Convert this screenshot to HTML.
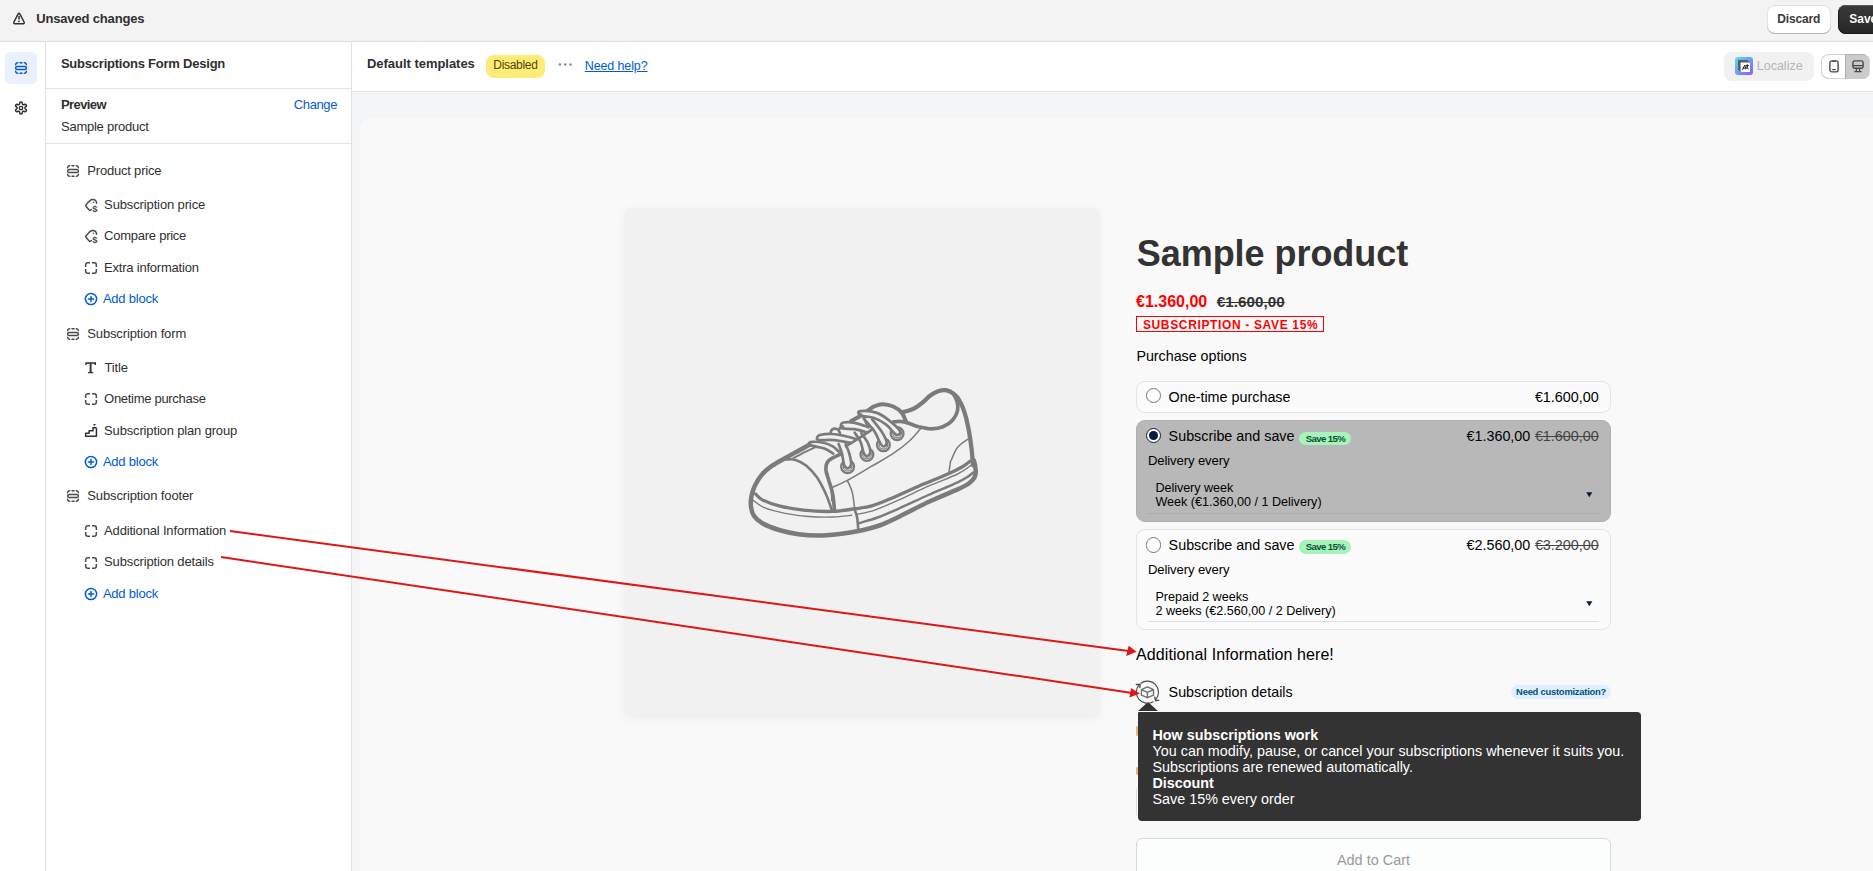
<!DOCTYPE html>
<html lang="en">
<head>
<meta charset="utf-8">
<title>Subscriptions Form Design</title>
<style>
*{box-sizing:border-box;margin:0;padding:0}
html,body{width:1873px;height:871px;overflow:hidden;background:#f4f5f7}
body{position:relative;font-family:"Liberation Sans",Arial,sans-serif;color:#303030;font-size:13px}
.abs{position:absolute}
.t{position:absolute;white-space:nowrap;line-height:16px}
#topbar{left:0;top:0;width:1873px;height:42px;background:#f3f3f3;border-bottom:1px solid #e0e0e0}
#rail{left:0;top:42px;width:46px;height:829px;background:#fff;border-right:1px solid #e3e3e3}
#side{left:46px;top:42px;width:306px;height:829px;background:#fff;border-right:1px solid #e3e3e3}
#mainhead{left:352px;top:42px;width:1521px;height:50px;background:#fff;border-bottom:1px solid #e3e3e3}
#panel{left:360px;top:118px;width:1513px;height:753px;background:#f9f9f9;border-top-left-radius:10px}
.hr{position:absolute;height:1px;background:#e3e3e3}
svg{position:absolute;overflow:visible}
</style>
</head>
<body>
<div id="topbar" class="abs"></div>
<div id="rail" class="abs"></div>
<div id="side" class="abs"></div>
<div id="mainhead" class="abs"></div>
<div id="panel" class="abs"></div>
<!-- top bar -->
<div class="t" style="left:36.2px;top:11px;font-size:13px;font-weight:bold;letter-spacing:-0.156px;color:#303030;">Unsaved changes</div>
<div class="abs" style="left:1766.5px;top:5px;width:64.5px;height:29px;background:#fff;border-radius:8px;box-shadow:inset 0 -1px 0 #b5b5b5,inset 0 0 0 1px #e3e3e3"></div>
<div class="t" style="left:1777.3px;top:11px;font-size:12px;font-weight:bold;letter-spacing:-0.147px;color:#3a3a3a;">Discard</div>
<div class="abs" style="left:1838px;top:5px;width:60px;height:29px;background:linear-gradient(#3a3a3a,#262626);border-radius:8px;box-shadow:inset 0 1px 0 #5a5a5a,inset 0 0 0 1px #1a1a1a"></div>
<div class="t" style="left:1849.3px;top:11px;font-size:12px;font-weight:bold;letter-spacing:-0.008px;color:#ffffff;">Save</div>

<!-- left rail -->
<div class="abs" style="left:5px;top:52px;width:32px;height:32px;border-radius:5px;background:#ebf1fc"></div>
<!-- sidebar -->
<div class="t" style="left:60.9px;top:56px;font-size:13px;font-weight:bold;letter-spacing:-0.222px;color:#303030;">Subscriptions Form Design</div>
<div class="hr" style="left:46px;top:88px;width:305px"></div>
<div class="t" style="left:61px;top:97px;font-size:13px;font-weight:bold;letter-spacing:-0.594px;color:#303030;">Preview</div>
<div class="t" style="left:293.8px;top:97px;font-size:13px;letter-spacing:-0.391px;color:#005bd3;">Change</div>
<div class="t" style="left:61px;top:119px;font-size:13px;letter-spacing:-0.254px;color:#303030;">Sample product</div>
<div class="hr" style="left:46px;top:143px;width:305px"></div>
<div class="t" style="left:87.3px;top:163px;font-size:13px;letter-spacing:-0.200px;color:#303030;">Product price</div>
<div class="t" style="left:104.1px;top:197px;font-size:13px;letter-spacing:-0.129px;color:#303030;">Subscription price</div>
<div class="t" style="left:104.1px;top:228px;font-size:13px;letter-spacing:-0.251px;color:#303030;">Compare price</div>
<div class="t" style="left:104.1px;top:260px;font-size:13px;letter-spacing:-0.216px;color:#303030;">Extra information</div>
<div class="t" style="left:102.9px;top:291px;font-size:13px;letter-spacing:-0.210px;color:#005bd3;">Add block</div>
<div class="t" style="left:87.3px;top:326px;font-size:13px;letter-spacing:-0.139px;color:#303030;">Subscription form</div>
<div class="t" style="left:104.5px;top:360px;font-size:13px;letter-spacing:-0.136px;color:#303030;">Title</div>
<div class="t" style="left:104.1px;top:391px;font-size:13px;letter-spacing:-0.296px;color:#303030;">Onetime purchase</div>
<div class="t" style="left:104.1px;top:423px;font-size:13px;letter-spacing:-0.156px;color:#303030;">Subscription plan group</div>
<div class="t" style="left:102.9px;top:454px;font-size:13px;letter-spacing:-0.210px;color:#005bd3;">Add block</div>
<div class="t" style="left:87.3px;top:488px;font-size:13px;letter-spacing:-0.127px;color:#303030;">Subscription footer</div>
<div class="t" style="left:104.1px;top:523px;font-size:13px;letter-spacing:-0.170px;color:#303030;">Additional Information</div>
<div class="t" style="left:104.1px;top:554px;font-size:13px;letter-spacing:-0.147px;color:#303030;">Subscription details</div>
<div class="t" style="left:102.9px;top:586px;font-size:13px;letter-spacing:-0.210px;color:#005bd3;">Add block</div>

<!-- icons -->
<svg style="left:9.2px;top:9px" width="20" height="20" viewBox="0 0 20 20" fill="none" stroke="#303030" stroke-width="1.5" stroke-linecap="round" stroke-linejoin="round"><path d="M9.05 5.1Q10 3.5 10.95 5.1L15.05 13Q15.75 14.7 14.2 14.7H5.8Q4.25 14.7 4.95 13Z"/><path d="M10 7.5V10.1"/><circle cx="10" cy="12.35" r="0.9" fill="#303030" stroke="none"/></svg>
<svg style="left:10.97px;top:57.97px" width="20" height="20" viewBox="0 0 20 20" fill="none" stroke="#005bd3" stroke-width="1.5" stroke-linecap="round"><rect x="4.65" y="8.4" width="10.7" height="3.2" rx="1.6"/><path d="M4.65 6.7A2.05 2.05 0 0 1 6.7 4.65M9 4.65H11M13.3 4.65A2.05 2.05 0 0 1 15.35 6.7M4.65 13.3A2.05 2.05 0 0 0 6.7 15.35M9 15.35H11M13.3 15.35A2.05 2.05 0 0 0 15.35 13.3"/></svg>
<svg style="left:10.97px;top:97.85px" width="20" height="20" viewBox="0 0 20 20" fill="none" stroke="#303030" stroke-width="1.5" stroke-linejoin="round"><path d="M13.90 10.00 L13.92 10.17 L13.96 10.35 L14.05 10.53 L14.17 10.74 L14.35 10.96 L14.78 11.28 L15.20 11.64 L15.33 11.94 L15.37 12.23 L15.37 12.50 L15.30 12.76 L15.20 13.00 L15.04 13.21 L14.85 13.40 L14.62 13.54 L14.34 13.64 L14.02 13.68 L13.50 13.50 L13.01 13.28 L12.72 13.24 L12.49 13.24 L12.28 13.26 L12.11 13.31 L11.95 13.38 L11.81 13.48 L11.68 13.61 L11.56 13.77 L11.45 13.98 L11.34 14.24 L11.28 14.78 L11.18 15.32 L10.98 15.58 L10.76 15.77 L10.52 15.90 L10.26 15.97 L10.00 16.00 L9.74 15.97 L9.48 15.90 L9.24 15.77 L9.02 15.58 L8.82 15.32 L8.72 14.78 L8.66 14.24 L8.55 13.98 L8.44 13.77 L8.32 13.61 L8.19 13.48 L8.05 13.38 L7.89 13.31 L7.72 13.26 L7.51 13.24 L7.28 13.24 L6.99 13.28 L6.50 13.50 L5.98 13.68 L5.66 13.64 L5.38 13.54 L5.15 13.40 L4.96 13.21 L4.80 13.00 L4.70 12.76 L4.63 12.50 L4.63 12.23 L4.67 11.94 L4.80 11.64 L5.22 11.28 L5.65 10.96 L5.83 10.74 L5.95 10.53 L6.04 10.35 L6.08 10.17 L6.10 10.00 L6.08 9.83 L6.04 9.65 L5.95 9.47 L5.83 9.26 L5.65 9.04 L5.22 8.72 L4.80 8.36 L4.67 8.06 L4.63 7.77 L4.63 7.50 L4.70 7.24 L4.80 7.00 L4.96 6.79 L5.15 6.60 L5.38 6.46 L5.66 6.36 L5.98 6.32 L6.50 6.50 L6.99 6.72 L7.28 6.76 L7.51 6.76 L7.72 6.74 L7.89 6.69 L8.05 6.62 L8.19 6.52 L8.32 6.39 L8.44 6.23 L8.55 6.02 L8.66 5.76 L8.72 5.22 L8.82 4.68 L9.02 4.42 L9.24 4.23 L9.48 4.10 L9.74 4.03 L10.00 4.00 L10.26 4.03 L10.52 4.10 L10.76 4.23 L10.98 4.42 L11.18 4.68 L11.28 5.22 L11.34 5.76 L11.45 6.02 L11.56 6.23 L11.68 6.39 L11.81 6.52 L11.95 6.62 L12.11 6.69 L12.28 6.74 L12.49 6.76 L12.72 6.76 L13.01 6.72 L13.50 6.50 L14.02 6.32 L14.34 6.36 L14.62 6.46 L14.85 6.60 L15.04 6.79 L15.20 7.00 L15.30 7.24 L15.37 7.50 L15.37 7.77 L15.33 8.06 L15.20 8.36 L14.78 8.72 L14.35 9.04 L14.17 9.26 L14.05 9.47 L13.96 9.65 L13.92 9.83Z"/><circle cx="10" cy="10" r="1.7" stroke-width="1.35"/></svg>
<svg style="left:62.85px;top:160.95px" width="20" height="20" viewBox="0 0 20 20" fill="none" stroke="#4a4a4a" stroke-width="1.5" stroke-linecap="round"><rect x="4.65" y="8.4" width="10.7" height="3.2" rx="1.6"/><path d="M4.65 6.7A2.05 2.05 0 0 1 6.7 4.65M9 4.65H11M13.3 4.65A2.05 2.05 0 0 1 15.35 6.7M4.65 13.3A2.05 2.05 0 0 0 6.7 15.35M9 15.35H11M13.3 15.35A2.05 2.05 0 0 0 15.35 13.3"/></svg>
<svg style="left:62.85px;top:323.70px" width="20" height="20" viewBox="0 0 20 20" fill="none" stroke="#4a4a4a" stroke-width="1.5" stroke-linecap="round"><rect x="4.65" y="8.4" width="10.7" height="3.2" rx="1.6"/><path d="M4.65 6.7A2.05 2.05 0 0 1 6.7 4.65M9 4.65H11M13.3 4.65A2.05 2.05 0 0 1 15.35 6.7M4.65 13.3A2.05 2.05 0 0 0 6.7 15.35M9 15.35H11M13.3 15.35A2.05 2.05 0 0 0 15.35 13.3"/></svg>
<svg style="left:62.85px;top:486.25px" width="20" height="20" viewBox="0 0 20 20" fill="none" stroke="#4a4a4a" stroke-width="1.5" stroke-linecap="round"><rect x="4.65" y="8.4" width="10.7" height="3.2" rx="1.6"/><path d="M4.65 6.7A2.05 2.05 0 0 1 6.7 4.65M9 4.65H11M13.3 4.65A2.05 2.05 0 0 1 15.35 6.7M4.65 13.3A2.05 2.05 0 0 0 6.7 15.35M9 15.35H11M13.3 15.35A2.05 2.05 0 0 0 15.35 13.3"/></svg>
<svg style="left:81.00px;top:195.05px" width="20" height="20" viewBox="0 0 20 20" fill="none" stroke="#4a4a4a" stroke-width="1.5" stroke-linecap="round" stroke-linejoin="round"><path d="M10.3 14.5L9.75 15.05A1.1 1.1 0 0 1 8.2 15.05L5.05 11.4A1.2 1.2 0 0 1 5.05 9.75L9 5.6A4 4 0 0 1 11.9 4.4A3.6 3.6 0 0 1 15.5 8.3"/><circle cx="12.45" cy="7.3" r="0.8" fill="#4a4a4a" stroke="none"/><text x="13.9" y="16.5" font-family="Liberation Sans,Arial,sans-serif" font-size="9.4" font-weight="bold" text-anchor="middle" fill="#4a4a4a" stroke="none">$</text></svg>
<svg style="left:81.00px;top:226.10px" width="20" height="20" viewBox="0 0 20 20" fill="none" stroke="#4a4a4a" stroke-width="1.5" stroke-linecap="round" stroke-linejoin="round"><path d="M10.3 14.5L9.75 15.05A1.1 1.1 0 0 1 8.2 15.05L5.05 11.4A1.2 1.2 0 0 1 5.05 9.75L9 5.6A4 4 0 0 1 11.9 4.4A3.6 3.6 0 0 1 15.5 8.3"/><circle cx="12.45" cy="7.3" r="0.8" fill="#4a4a4a" stroke="none"/><text x="13.9" y="16.5" font-family="Liberation Sans,Arial,sans-serif" font-size="9.4" font-weight="bold" text-anchor="middle" fill="#4a4a4a" stroke="none">$</text></svg>
<svg style="left:81.00px;top:257.90px" width="20" height="20" viewBox="0 0 20 20" fill="none" stroke="#4a4a4a" stroke-width="1.5"><path d="M4.65 9V6.9A2.25 2.25 0 0 1 6.9 4.65H9M11 4.65H13.1A2.25 2.25 0 0 1 15.35 6.9V9M15.35 11V13.1A2.25 2.25 0 0 1 13.1 15.35H11M9 15.35H6.9A2.25 2.25 0 0 1 4.65 13.1V11"/></svg>
<svg style="left:81.00px;top:388.80px" width="20" height="20" viewBox="0 0 20 20" fill="none" stroke="#4a4a4a" stroke-width="1.5"><path d="M4.65 9V6.9A2.25 2.25 0 0 1 6.9 4.65H9M11 4.65H13.1A2.25 2.25 0 0 1 15.35 6.9V9M15.35 11V13.1A2.25 2.25 0 0 1 13.1 15.35H11M9 15.35H6.9A2.25 2.25 0 0 1 4.65 13.1V11"/></svg>
<svg style="left:81.00px;top:521.20px" width="20" height="20" viewBox="0 0 20 20" fill="none" stroke="#4a4a4a" stroke-width="1.5"><path d="M4.65 9V6.9A2.25 2.25 0 0 1 6.9 4.65H9M11 4.65H13.1A2.25 2.25 0 0 1 15.35 6.9V9M15.35 11V13.1A2.25 2.25 0 0 1 13.1 15.35H11M9 15.35H6.9A2.25 2.25 0 0 1 4.65 13.1V11"/></svg>
<svg style="left:81.00px;top:552.50px" width="20" height="20" viewBox="0 0 20 20" fill="none" stroke="#4a4a4a" stroke-width="1.5"><path d="M4.65 9V6.9A2.25 2.25 0 0 1 6.9 4.65H9M11 4.65H13.1A2.25 2.25 0 0 1 15.35 6.9V9M15.35 11V13.1A2.25 2.25 0 0 1 13.1 15.35H11M9 15.35H6.9A2.25 2.25 0 0 1 4.65 13.1V11"/></svg>
<svg style="left:81.00px;top:288.85px" width="20" height="20" viewBox="0 0 20 20" fill="none" stroke="#005bd3" stroke-width="1.5" stroke-linecap="round"><circle cx="10" cy="10" r="5.6"/><path d="M7.4 10H12.6M10 7.4V12.6"/></svg>
<svg style="left:81.00px;top:451.80px" width="20" height="20" viewBox="0 0 20 20" fill="none" stroke="#005bd3" stroke-width="1.5" stroke-linecap="round"><circle cx="10" cy="10" r="5.6"/><path d="M7.4 10H12.6M10 7.4V12.6"/></svg>
<svg style="left:81.00px;top:583.60px" width="20" height="20" viewBox="0 0 20 20" fill="none" stroke="#005bd3" stroke-width="1.5" stroke-linecap="round"><circle cx="10" cy="10" r="5.6"/><path d="M7.4 10H12.6M10 7.4V12.6"/></svg>
<svg style="left:85.30px;top:361.70px" width="12" height="12" viewBox="0 0 12 12" fill="#303030"><path d="M0.3 0.3H11V2.9H9.7Q9.7 1.75 8.7 1.75H6.55V9.3Q6.55 10.2 8.3 10.35V11.2H2.9V10.35Q4.7 10.2 4.7 9.3V1.75H2.5Q1.6 1.75 1.6 2.9H0.3Z"/></svg>
<svg style="left:80px;top:420px" width="20" height="20" viewBox="0 0 20 20" fill="none" stroke="#303030" stroke-width="1.5" stroke-linejoin="round"><path d="M5.67 16.25V13.2H9.1V10.73H12.97V7.84H15.6Q16.43 7.84 16.43 8.7V16.25Z"/><path d="M13.05 3.9H15.95L14.5 6.1Z" fill="#303030" stroke="none"/></svg>

<!-- main header -->
<div class="t" style="left:367px;top:56px;font-size:13px;font-weight:bold;letter-spacing:-0.034px;color:#303030;">Default templates</div>
<div class="abs" style="left:486px;top:55px;width:59px;height:23px;border-radius:8px;background:#ffeb78"></div>
<div class="t" style="left:493.3px;top:57px;font-size:12px;letter-spacing:-0.313px;color:#4f4700;">Disabled</div>
<svg style="left:558px;top:62px" width="14" height="5" viewBox="0 0 14 5"><g fill="#8a8a8a"><circle cx="1.9" cy="2.5" r="1.25"/><circle cx="7.2" cy="2.5" r="1.25"/><circle cx="12.5" cy="2.5" r="1.25"/></g></svg>
<div class="t" style="left:584.8px;top:58px;font-size:12.5px;letter-spacing:-0.125px;color:#005bd3;text-decoration:underline;text-underline-offset:1px">Need help?</div>
<div class="abs" style="left:1724px;top:52px;width:90px;height:29px;border-radius:8px;background:#f1f1f1"></div>
<div class="t" style="left:1756.8px;top:58px;font-size:12.5px;letter-spacing:-0.009px;color:#b5b5b5;">Localize</div>
<div class="abs" style="left:1821px;top:54px;width:49px;height:25px;border-radius:8px;background:#fff;box-shadow:inset 0 0 0 1px #d4d4d4,inset 0 -1px 0 #b5b5b5;overflow:hidden"><div class="abs" style="left:24px;top:0;width:24px;height:25px;background:#cbcbcb;box-shadow:inset 1px 1px 0 #b0b0b0"></div></div>

<!-- localize app icon -->
<svg style="left:1735px;top:57px" width="18" height="18" viewBox="0 0 18 18"><defs><linearGradient id="lg1" x1="0" y1="0" x2="1" y2="1"><stop offset="0" stop-color="#56dcff"/><stop offset="0.5" stop-color="#6f9dff"/><stop offset="1" stop-color="#8b55ff"/></linearGradient></defs><rect width="18" height="18" rx="3.2" fill="url(#lg1)"/><path d="M3 3.6Q3 3 3.6 3H12.4L15 5.6V14.4Q15 15 14.4 15H5.6L3 12.4Z" fill="#5b5b63"/><rect x="5.6" y="5.6" width="9.4" height="9.4" rx="0.6" fill="#fff"/><path d="M7.6 12.6L9.6 8.2L10.6 11M8.3 11.2H10.4M10.8 8.6H13.4M12.2 7.6V8.6M13 8.8Q12.4 11 10.8 12M11.3 9.8Q12 11.4 13.4 12" fill="none" stroke="#111" stroke-width="0.9" stroke-linecap="round" stroke-linejoin="round"/></svg>
<!-- phone icon -->
<svg style="left:1829px;top:59.6px" width="10" height="13" viewBox="0 0 10 13" fill="none" stroke="#4a4a4a" stroke-width="1.4" stroke-linecap="round"><rect x="0.9" y="0.9" width="8.2" height="11" rx="2"/><path d="M3.3 1.2Q5 2.2 6.7 1.2" stroke-width="1"/><path d="M3.7 9.7H6.3" stroke-width="1.2"/></svg>
<!-- desktop icon -->
<svg style="left:1852px;top:60px" width="12" height="12.4" viewBox="0 0 12 12.4" fill="none" stroke="#4a4a4a" stroke-width="1.4" stroke-linecap="round" stroke-linejoin="round"><rect x="0.9" y="0.9" width="10.2" height="7.4" rx="1.8"/><path d="M1 5.6H11" stroke-width="1.1"/><path d="M4.6 8.6L4.2 11.4M7.4 8.6L7.8 11.4M2.8 11.6H9.2" stroke-width="1.2"/></svg>

<!-- product preview -->
<div class="abs" style="left:624.4px;top:207.7px;width:475.7px;height:509.3px;border-radius:8px;background:#f1f1f1;box-shadow:0 2px 8px rgba(0,0,0,.05)"></div>
<div class="t" style="left:1136.75px;top:232px;line-height:44px;font-size:36px;font-weight:bold;letter-spacing:-0.046px;color:#333333;">Sample product</div>
<div class="t" style="left:1136.1px;top:292px;line-height:20px;font-size:16px;font-weight:bold;letter-spacing:-0.010px;color:#ff0000;">€1.360,00</div>
<div class="t" style="left:1216.8px;top:292px;line-height:20px;font-size:15.2px;font-weight:bold;letter-spacing:0.036px;color:#333333;text-decoration:line-through">€1.600,00</div>
<div class="abs" style="left:1136px;top:316px;width:188px;height:16px;border:1.2px solid #ff0000"></div>
<div class="t" style="left:1142.9px;top:317px;font-size:12px;font-weight:bold;letter-spacing:0.649px;color:#ff0000;">SUBSCRIPTION - SAVE 15%</div>
<div class="t" style="left:1136.4px;top:348px;font-size:14.3px;letter-spacing:-0.018px;color:#000000;">Purchase options</div>

<!-- option 1 -->
<div class="abs" style="left:1136px;top:381px;width:475px;height:32px;border:1px solid #e1e4e8;border-radius:9px;background:#fbfbfb"></div>
<div class="abs" style="left:1146px;top:388.1px;width:15.4px;height:15.4px;border-radius:50%;border:1.2px solid #767676;background:#fff"></div>
<div class="t" style="left:1168.6px;top:389px;font-size:14.35px;letter-spacing:-0.005px;color:#000000;">One-time purchase</div>
<div class="t" style="left:1534.9px;top:389px;font-size:14.35px;letter-spacing:-0.001px;color:#000000;">€1.600,00</div>

<!-- option 2 (selected) -->
<div class="abs" style="left:1136px;top:420px;width:475px;height:102px;border-radius:9px;background:#b8b8b8;border:1px solid #adb0b4"></div>
<div class="abs" style="left:1146px;top:428.1px;width:15.4px;height:15.4px;border-radius:50%;border:1.3px solid #0a1e3c;background:#fff"></div>
<div class="abs" style="left:1149.3px;top:431.4px;width:8.8px;height:8.8px;border-radius:50%;background:#0a1e3c"></div>
<div class="t" style="left:1168.6px;top:428px;font-size:14.35px;letter-spacing:-0.005px;color:#000000;">Subscribe and save</div>
<div class="abs" style="left:1298.8px;top:431.9px;width:52.2px;height:13.3px;border-radius:7px;background:#a7f3bb"></div>
<div class="t" style="left:1305.7px;top:431px;font-size:9.6px;font-weight:bold;letter-spacing:-0.610px;color:#0c5132;">Save 15%</div>
<div class="t" style="left:1466.5px;top:428px;font-size:14.35px;letter-spacing:-0.001px;color:#000000;">€1.360,00</div>
<div class="t" style="left:1534.9px;top:428px;font-size:14.35px;letter-spacing:-0.001px;color:#444444;text-decoration:line-through">€1.600,00</div>
<div class="t" style="left:1148px;top:453px;font-size:13.1px;letter-spacing:-0.111px;color:#000000;">Delivery every</div>
<div class="t" style="left:1155.4px;top:480px;font-size:12.6px;letter-spacing:-0.045px;color:#000000;">Delivery week</div>
<div class="t" style="left:1155.4px;top:494px;font-size:12.6px;letter-spacing:-0.006px;color:#000000;">Week (€1.360,00 / 1 Delivery)</div>
<svg style="left:1586px;top:491.6px" width="7" height="6" viewBox="0 0 7 6"><path d="M0.2 0.3H6.4L3.3 5.3Z" fill="#0a1e3c"/></svg>
<div class="abs" style="left:1148px;top:513px;width:451px;height:1px;background:#a9acb1"></div>

<!-- option 3 -->
<div class="abs" style="left:1136px;top:529px;width:475px;height:101px;border:1px solid #e1e4e8;border-radius:9px;background:#fbfbfb"></div>
<div class="abs" style="left:1146px;top:537.4px;width:15.4px;height:15.4px;border-radius:50%;border:1.2px solid #767676;background:#fff"></div>
<div class="t" style="left:1168.6px;top:537px;font-size:14.35px;letter-spacing:-0.005px;color:#000000;">Subscribe and save</div>
<div class="abs" style="left:1298.8px;top:540.3px;width:52.2px;height:13.3px;border-radius:7px;background:#a7f3bb"></div>
<div class="t" style="left:1305.7px;top:539px;font-size:9.6px;font-weight:bold;letter-spacing:-0.610px;color:#0c5132;">Save 15%</div>
<div class="t" style="left:1466.5px;top:537px;font-size:14.35px;letter-spacing:-0.001px;color:#000000;">€2.560,00</div>
<div class="t" style="left:1534.9px;top:537px;font-size:14.35px;letter-spacing:-0.001px;color:#444444;text-decoration:line-through">€3.200,00</div>
<div class="t" style="left:1148px;top:562px;font-size:13.1px;letter-spacing:-0.111px;color:#000000;">Delivery every</div>
<div class="t" style="left:1155.4px;top:589px;font-size:12.6px;letter-spacing:-0.021px;color:#000000;">Prepaid 2 weeks</div>
<div class="t" style="left:1155.4px;top:603px;font-size:12.6px;letter-spacing:-0.007px;color:#000000;">2 weeks (€2.560,00 / 2 Delivery)</div>
<svg style="left:1586px;top:600.6px" width="7" height="6" viewBox="0 0 7 6"><path d="M0.2 0.3H6.4L3.3 5.3Z" fill="#0a1e3c"/></svg>
<div class="abs" style="left:1148px;top:621px;width:451px;height:1px;background:#dcdfe3"></div>

<!-- footer -->
<div class="t" style="left:1136.1px;top:645px;line-height:20px;font-size:16px;letter-spacing:0.076px;color:#000000;">Additional Information here!</div>
<div class="t" style="left:1168.6px;top:684px;font-size:14.3px;letter-spacing:0.006px;color:#000000;">Subscription details</div>
<div class="abs" style="left:1510.8px;top:685px;width:100.4px;height:13.8px;border-radius:7px;background:#dfefff"></div>
<div class="t" style="left:1516.1px;top:684px;font-size:9.4px;font-weight:bold;letter-spacing:-0.225px;color:#00527c;">Need customization?</div>

<!-- add to cart -->
<div class="abs" style="left:1136px;top:838px;width:475px;height:50px;border:1px solid #d5d8dc;border-radius:6px;background:#fcfdfd"></div>
<div class="t" style="left:1337px;top:852px;font-size:14.35px;letter-spacing:0.040px;color:#9a9a9a;">Add to Cart</div>

<!-- elements peeking out behind tooltip -->
<div class="abs" style="left:1136px;top:786px;width:60px;height:32px;border:1px solid #d9dcdf;border-radius:5px;background:#fff"></div>
<div class="abs" style="left:1136.3px;top:726px;width:2px;height:10px;border-radius:1px;background:#eab676"></div>
<div class="abs" style="left:1136.3px;top:767px;width:2px;height:7.5px;border-radius:1px;background:#eab676"></div>
<!-- tooltip -->
<svg style="left:1138px;top:701.9px" width="20" height="9" viewBox="0 0 20 9"><path d="M0 8.9L10 0L20 8.9Z" fill="#333333"/></svg>
<div class="abs" style="left:1138px;top:712px;width:503.2px;height:109px;border-radius:1px 4px 4px 4px;background:#333333"></div>
<div class="t" style="left:1152.5px;top:727px;font-size:14.35px;font-weight:bold;letter-spacing:-0.008px;color:#ffffff;">How subscriptions work</div>
<div class="t" style="left:1152.5px;top:743px;font-size:14.35px;letter-spacing:0.008px;color:#ffffff;">You can modify, pause, or cancel your subscriptions whenever it suits you.</div>
<div class="t" style="left:1152.5px;top:759px;font-size:14.35px;color:#ffffff;">Subscriptions are renewed automatically.</div>
<div class="t" style="left:1152.5px;top:775px;font-size:14.35px;font-weight:bold;color:#ffffff;">Discount</div>
<div class="t" style="left:1152.5px;top:791px;font-size:14.35px;color:#ffffff;">Save 15% every order</div>

<!-- shoe placeholder -->
<svg style="left:730px;top:370px" width="270" height="190" viewBox="730 370 270 190" fill="none" stroke="#7b7b7b" stroke-linecap="round" stroke-linejoin="round">
<path d="M811.1 443.7C808.5 445.2 799.5 450.2 795.4 452.4C791.4 454.7 790.7 454.9 786.8 457.1C783.0 459.4 776.4 462.8 772.2 465.7C768.1 468.6 764.8 471.3 762.0 474.5C759.1 477.8 756.9 481.7 755.1 485.3C753.4 488.8 752.2 492.6 751.5 496.0C750.8 499.4 750.6 502.5 750.9 505.8C751.3 509.0 751.7 512.6 753.7 515.5C755.6 518.4 758.2 520.9 762.4 523.3C766.7 525.7 773.0 528.1 779.0 530.0C785.1 531.8 792.1 533.3 798.6 534.2C805.1 535.2 811.6 535.6 818.1 535.6C824.6 535.6 831.1 535.0 837.6 534.2C844.1 533.5 850.1 532.8 857.1 531.3C864.1 529.9 872.5 527.9 879.5 525.5C886.5 523.0 890.9 520.6 899.0 516.7C907.2 512.8 918.6 506.6 928.3 502.0C938.1 497.5 950.8 492.4 957.6 489.4C964.3 486.3 966.0 485.5 968.8 483.5C971.6 481.5 973.2 479.6 974.4 477.6C975.5 475.7 975.8 474.4 975.8 471.6C975.7 468.8 974.4 462.0 974.0 460.9C973.6 459.7 973.3 464.2 973.2 464.9" stroke-width="4.5"/>
<path d="M974.0 460.9C973.9 461.5 973.6 467.0 973.2 464.9C972.8 462.8 972.2 454.3 971.5 448.3C970.7 442.3 969.7 434.7 968.5 428.8C967.4 422.9 966.1 417.3 964.6 412.7C963.2 408.1 961.5 404.1 959.7 401.0C958.0 397.8 956.2 395.6 953.9 393.9C951.6 392.1 948.5 390.7 945.9 390.2C943.3 389.8 940.7 390.3 938.1 391.2C935.5 392.1 932.9 393.7 930.3 395.6C927.7 397.5 925.1 400.6 922.5 402.6C919.9 404.7 917.2 406.7 914.7 408.1C912.1 409.5 909.5 410.4 907.3 411.0C905.1 411.7 902.5 412.0 901.5 412.2" stroke-width="4.3"/>
<path d="M905.9 421.0C905.1 419.6 903.6 414.8 901.5 412.4C899.4 410.0 896.3 407.9 893.2 406.5C890.1 405.2 886.0 404.3 882.9 404.2C879.8 404.1 877.2 405.0 874.6 406.2C872.0 407.3 869.8 409.3 867.3 411.0C864.9 412.7 862.7 414.7 860.0 416.3C857.4 417.9 852.7 420.0 851.3 420.8" stroke-width="4.0"/>
<path d="M893.7 421.8C894.9 421.7 898.6 421.3 901.0 421.5C903.3 421.7 904.9 422.1 907.8 422.9C910.8 423.8 914.7 425.7 918.6 426.7C922.5 427.6 927.2 428.8 931.2 428.8C935.3 428.8 939.4 428.3 943.0 426.8C946.5 425.4 950.3 422.8 952.7 420.0C955.2 417.2 956.9 413.3 957.6 410.3C958.3 407.2 957.8 404.2 957.1 401.5C956.4 398.7 953.9 395.0 953.2 393.7" stroke-width="3.7"/>
<path d="M755.6 494.0C756.8 495.0 758.5 497.9 762.4 499.9C766.4 501.8 772.2 504.0 779.0 505.8C785.9 507.5 794.5 509.2 803.4 510.1C812.4 511.1 824.1 511.7 832.7 511.4C841.3 511.2 848.7 509.6 855.2 508.7C861.7 507.7 865.5 507.5 871.7 505.8C877.9 504.0 884.4 501.2 892.2 497.9C900.0 494.7 909.3 490.2 918.6 486.2C927.8 482.2 940.5 477.3 947.8 474.0C955.2 470.8 958.7 468.9 962.5 466.7C966.2 464.5 969.0 462.0 970.3 461.1" stroke-width="3.3"/>
<path d="M753.2 500.4C755.0 501.6 759.3 505.6 764.4 507.7C769.5 509.8 776.6 511.6 783.9 513.1C791.2 514.5 800.2 515.8 808.3 516.5C816.5 517.1 825.5 517.2 832.7 517.0C840.0 516.8 848.6 515.6 851.7 515.3" stroke-width="1.4"/>
<path d="M857.1 514.3C860.0 513.6 867.7 512.6 874.6 510.1C881.6 507.7 890.1 503.9 899.0 499.9C908.0 495.9 918.6 490.5 928.3 486.2C938.1 481.9 950.4 477.5 957.6 474.0C964.8 470.5 969.0 466.7 971.3 465.2" stroke-width="1.4"/>
<path d="M858.6 523.3C861.7 522.3 870.8 519.9 877.6 517.5C884.3 515.0 890.6 512.2 899.0 508.5C907.5 504.7 918.6 499.4 928.3 495.0C938.1 490.7 951.1 485.3 957.6 482.3C964.1 479.3 964.8 478.6 967.4 477.0C970.0 475.3 972.2 473.3 973.2 472.6" stroke-width="2.4"/>
<path d="M854.7 509.7C855.1 511.0 856.5 514.1 857.1 517.5C857.7 520.8 858.1 527.6 858.3 529.7" stroke-width="2.6"/>
<path d="M785.9 459.4C787.5 459.5 792.2 458.8 795.6 459.9C799.0 460.9 802.8 462.8 806.4 465.7C809.9 468.7 813.8 472.7 817.1 477.4C820.4 482.2 823.4 488.4 825.9 494.0C828.4 499.7 831.2 508.3 832.2 511.1" stroke-width="2.6"/>
<path d="M840.5 454.2C838.5 455.3 830.8 458.3 828.3 460.9C825.9 463.4 825.8 466.4 825.9 469.6C826.0 472.9 827.7 476.3 828.8 480.4C830.0 484.4 831.8 489.0 832.7 494.0C833.7 499.1 834.2 507.9 834.5 510.6" stroke-width="3.6"/>
<path d="M827.8 473.5C828.3 475.8 830.1 482.7 830.8 487.2C831.4 491.8 831.6 498.6 831.7 500.9" stroke-width="1.3"/>
<path d="M832.7 487.2C835.2 486.1 841.1 483.7 847.4 480.4C853.6 477.0 862.5 471.6 870.0 467.2C877.5 462.8 885.7 458.5 892.2 454.2C898.7 449.9 904.1 445.7 908.8 441.5C913.5 437.3 918.6 430.9 920.5 428.8" stroke-width="1.5"/>
<path d="M847.4 480.6C848.2 482.5 851.0 487.3 852.2 492.1C853.5 496.9 854.3 506.3 854.7 509.2" stroke-width="1.5"/>
<path d="M948.8 473.1C949.1 471.3 949.9 465.0 950.3 462.8C950.7 460.6 950.0 462.6 951.3 460.0C952.5 457.5 954.8 450.9 957.6 447.3C960.4 443.8 966.5 440.3 968.3 438.9" stroke-width="1.5"/>
<path d="M793.2 458.3C795.1 457.3 800.3 454.4 804.2 452.4C808.0 450.5 814.1 447.7 816.1 446.8" stroke-width="2.0"/>
<circle cx="847.6" cy="466.7" r="6.4" stroke-width="2.3" fill="#f1f1f1"/>
<circle cx="847.6" cy="466.7" r="4.3" stroke-width="1.1" fill="#f1f1f1"/>
<circle cx="866.9" cy="454.5" r="6.4" stroke-width="2.3" fill="#f1f1f1"/>
<circle cx="866.9" cy="454.5" r="4.3" stroke-width="1.1" fill="#f1f1f1"/>
<circle cx="883.4" cy="444.8" r="6.4" stroke-width="2.3" fill="#f1f1f1"/>
<circle cx="883.4" cy="444.8" r="4.3" stroke-width="1.1" fill="#f1f1f1"/>
<circle cx="897.1" cy="433.6" r="6.4" stroke-width="2.3" fill="#f1f1f1"/>
<circle cx="897.1" cy="433.6" r="4.3" stroke-width="1.1" fill="#f1f1f1"/>
<path d="M838.6 443.8C839.1 445.4 841.0 450.1 842.0 453.6C842.9 457.1 843.2 462.3 844.1 464.8C845.1 467.3 846.5 468.5 847.6 468.4C848.8 468.3 850.9 466.8 851.1 464.3C851.4 461.8 850.2 456.9 849.3 453.6C848.4 450.2 846.3 445.8 845.7 444.3" stroke-width="2.7" fill="#f1f1f1"/>
<path d="M854.7 432.6C855.6 434.1 859.0 438.5 860.5 441.8C862.0 445.2 862.6 450.2 863.6 452.6C864.7 455.0 865.7 456.4 866.9 456.3C868.0 456.2 870.2 454.5 870.3 452.1C870.4 449.7 868.8 445.0 867.3 441.8C865.8 438.7 862.3 434.7 861.3 433.3" stroke-width="2.7" fill="#f1f1f1"/>
<path d="M863.4 418.4C865.2 420.5 871.4 427.0 874.2 431.1C877.0 435.2 878.7 440.4 880.2 443.0C881.8 445.6 882.4 446.6 883.4 446.5C884.5 446.5 886.9 445.0 886.7 442.6C886.4 440.2 884.4 436.0 882.0 432.1C879.6 428.2 873.8 421.5 872.2 419.4" stroke-width="2.7" fill="#f1f1f1"/>
<path d="M868.3 427.2C867.3 425.3 864.1 418.3 862.5 416.0C860.8 413.7 858.9 414.4 858.6 413.5C858.2 412.7 857.6 411.3 860.5 411.1C863.4 410.9 871.6 411.2 876.1 412.6C880.7 414.0 883.9 416.3 887.8 419.4C891.8 422.5 898.5 428.5 900.0 431.1C901.6 433.7 898.2 435.0 897.1 435.2C896.1 435.5 895.6 434.4 893.7 432.6C891.8 430.8 889.1 426.7 885.9 424.3C882.6 421.8 878.5 419.4 874.2 417.9C869.9 416.5 862.4 416.1 860.0 415.7" stroke-width="2.7" fill="#f1f1f1"/>
<path d="M867.3 432.6C865.2 432.0 858.8 429.9 854.7 429.2C850.5 428.5 844.7 429.1 842.5 428.4C840.2 427.6 840.8 425.7 841.0 424.8C841.2 423.8 841.2 422.8 843.4 422.5C845.7 422.2 850.5 422.0 854.7 422.8C858.8 423.6 866.0 426.5 868.3 427.2" stroke-width="2.7" fill="#f1f1f1"/>
<path d="M850.8 442.8C848.0 442.4 839.4 440.5 834.2 440.1C828.9 439.6 821.9 440.4 819.0 440.1C816.2 439.7 816.9 438.8 817.1 437.9C817.2 437.1 817.5 435.7 820.0 435.0C822.5 434.4 827.7 433.8 832.2 434.0C836.7 434.3 842.9 435.6 846.8 436.5C850.8 437.3 854.2 438.7 855.6 439.1" stroke-width="2.7" fill="#f1f1f1"/>
<path d="M830.7 432.6C830.9 432.1 831.0 430.6 831.7 429.9C832.5 429.3 834.2 428.6 835.3 428.7C836.5 428.7 837.8 429.6 838.6 430.3C839.3 431.1 839.8 432.8 840.0 433.3" stroke-width="2.7" fill="#f1f1f1"/>
<path d="M833.2 453.6C831.7 452.7 827.8 449.8 824.4 448.5C821.0 447.2 815.3 446.7 812.7 445.9C810.1 445.2 809.1 444.5 809.0 443.8C808.9 443.1 809.6 442.0 812.2 441.8C814.8 441.7 820.9 442.2 824.4 443.0C827.9 443.8 830.8 445.3 833.2 446.7C835.6 448.2 837.9 450.8 838.8 451.6" stroke-width="2.7" fill="#f1f1f1"/>
<path d="M845.9 446.2C847.3 445.3 850.9 443.2 854.7 440.9C858.4 438.5 865.3 434.1 868.3 432.1C871.3 430.1 872.0 429.2 872.7 428.7" stroke-width="2.8"/>
<path d="M850.8 421.8 L858.6 416.5" stroke-width="2.8"/>
<path d="M839.5 428.7 L842.9 426.4" stroke-width="2.8"/>
</svg>

<!-- subscription details icon -->
<svg style="left:1135px;top:679.5px" width="25" height="25" viewBox="0 0 25 25" fill="none" stroke="#484848" stroke-width="1.1" stroke-linecap="round" stroke-linejoin="round">
<path d="M5.8 3.28A11.1 11.1 0 0 1 20.84 19.41"/><path d="M18.12 21.71A11.1 11.1 0 0 1 3.88 5.08"/>
<path d="M19.8 17.2L20.5 20.5L23.8 20.3M1.3 4.5L5.1 4.4L4.9 7.6" stroke-width="1.3"/>
<path d="M12.4 6.9L18.5 9.7V15.2L12.4 17.7L6.4 15.2V9.7ZM6.4 9.7L12.4 12.4L18.5 9.7M12.4 12.4V17.7" stroke="#6e6e6e" stroke-width="1.35"/>
</svg>
<!-- annotation arrows -->
<svg style="left:0;top:0" width="1873" height="871" viewBox="0 0 1873 871">
<g stroke="#e01616" stroke-width="2" fill="#e01616" stroke-linecap="butt">
<line x1="230" y1="531" x2="1128.5" y2="651"/>
<path d="M1136.6 651.7L1126.2 656L1128.7 645.8Z" stroke="none"/>
<line x1="221" y1="557" x2="1132" y2="692.9"/>
<path d="M1139.8 693.5L1129.4 697.5L1131 688Z" stroke="none"/>
</g>
</svg>

</body>
</html>
